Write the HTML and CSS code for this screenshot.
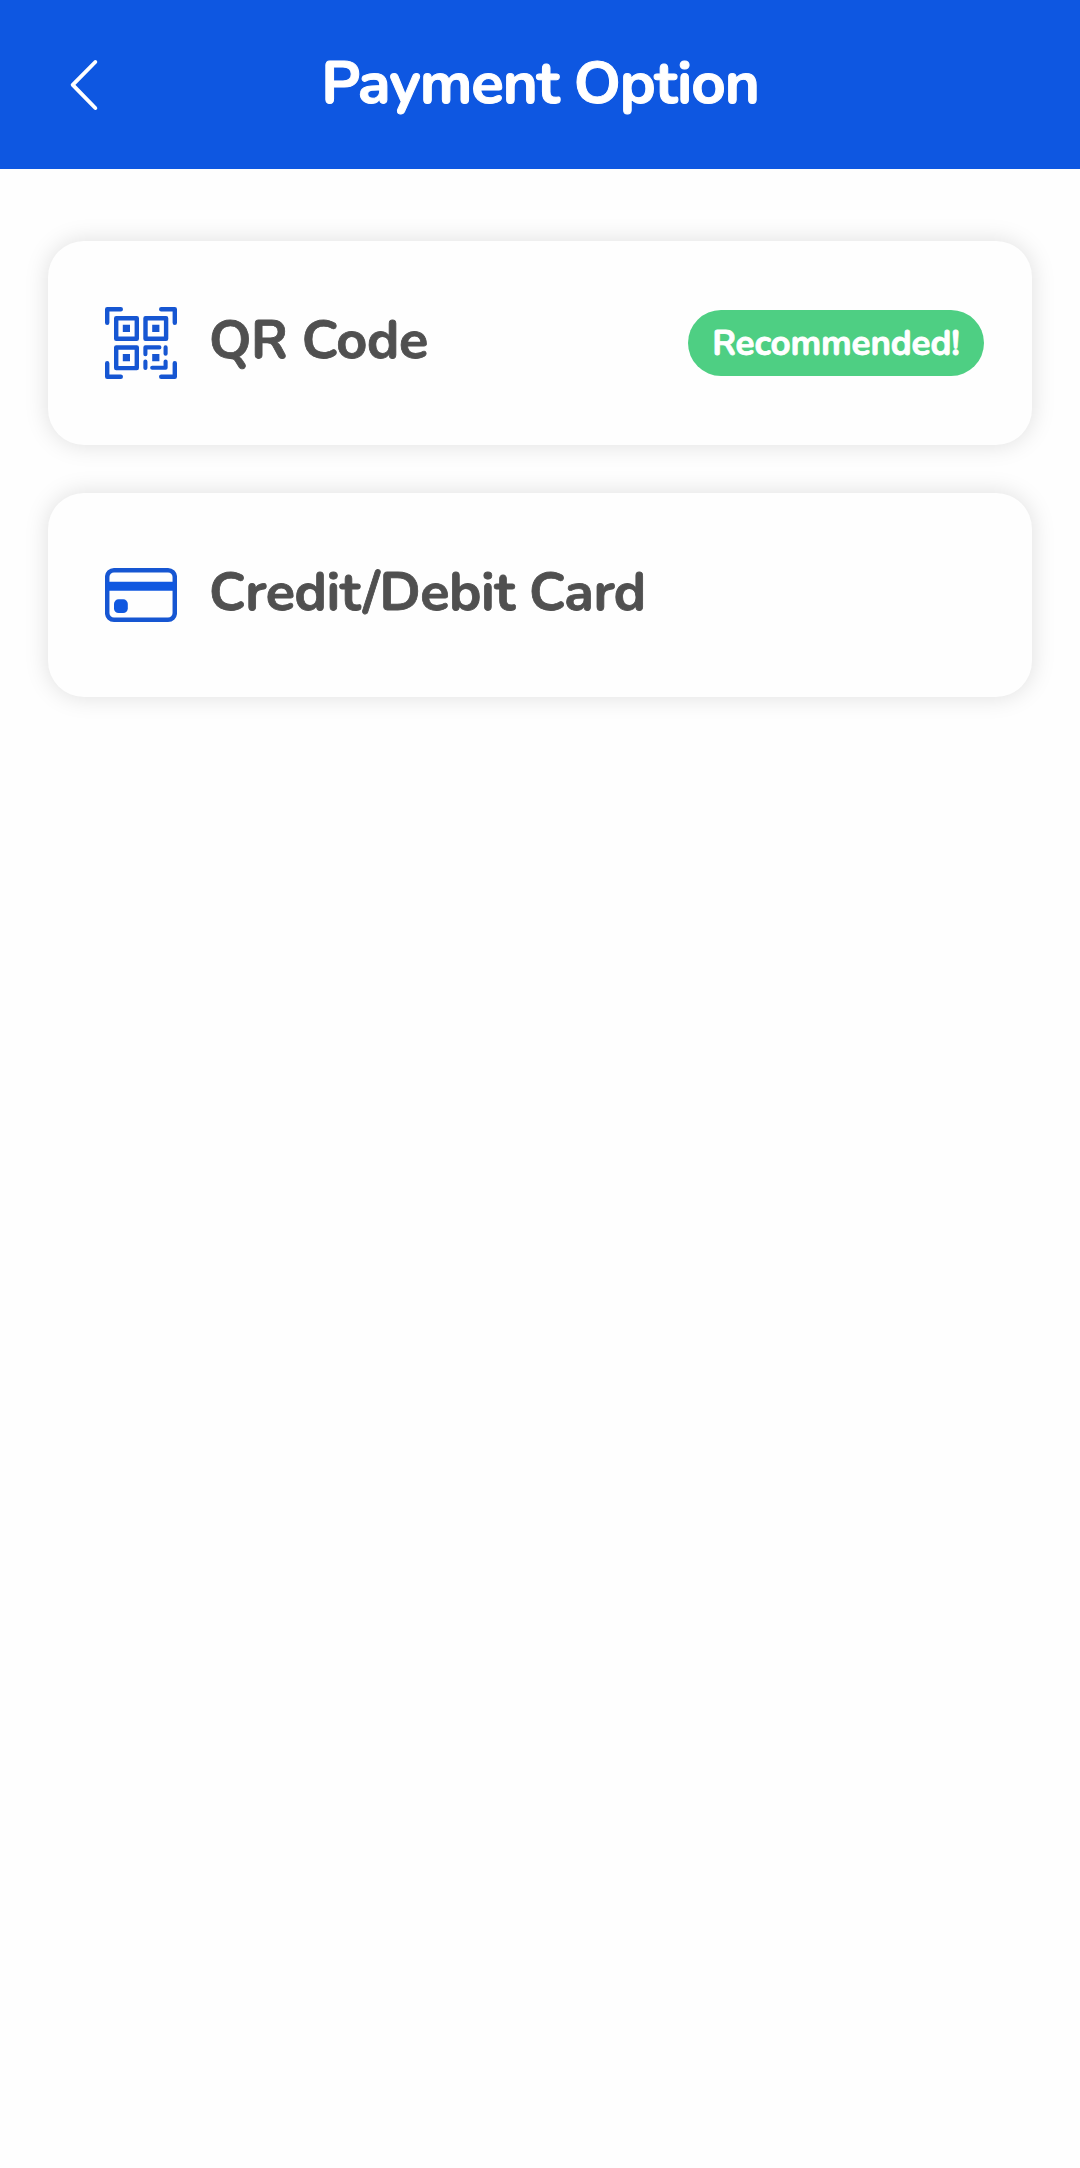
FILE: index.html
```html
<!DOCTYPE html>
<html lang="en">
<head>
<meta charset="utf-8">
<title>Payment Option</title>
<link rel="stylesheet" href="styles.css">
</head>
<body>
<header class="header">
  <button class="back" aria-label="Back">
    <svg width="30" height="54" viewBox="0 0 30 54" fill="none" stroke="#fff" stroke-width="3.9" stroke-linecap="round" stroke-linejoin="round"><path d="M26.3 4 3.7 26.9 26.3 50"/></svg>
  </button>
  <h1 class="title">Payment Option</h1>
</header>
<main class="options">
  <section class="option">
    <svg class="icon" viewBox="0 0 72 72" fill="none" stroke="#1656d2" stroke-width="4.4" stroke-linecap="round" stroke-linejoin="round">
      <path d="M2.2 15.8V2.2h13.6M56.2 2.2h13.6v13.6M2.2 56.2v13.6h13.6M56.2 69.8h13.6V56.2"/>
      <path d="M11.2 11.2h20.6v20.6H11.2zM40.5 11.2h20.6v20.6H40.5zM11.2 40.5h20.6v20.6H11.2z"/>
      <path stroke-width="4.1" d="M40.4 47.2v-6.8H54.4M60.6 40.4v6.4M40.4 54.6v6.4M60.6 54.6v6.1H47.2"/>
      <path fill="#1656d2" stroke="none" d="M17.8 17.8H25V25h-7.2zM47.2 17.8h7.2V25h-7.2zM17.8 47.1H25v7.2h-7.2zM47.2 47.1h7.2v7.2h-7.2z"/>
    </svg>
    <h2 class="name">QR Code</h2>
    <span class="badge">Recommended!</span>
  </section>
  <section class="option">
    <svg class="icon" viewBox="0 0 72 72">
      <rect x="2.2" y="11.2" width="67.6" height="49.6" rx="6.8" fill="none" stroke="#1656d2" stroke-width="4.5"/>
      <path fill="#1058e0" d="M2 22.7h68v9H2z"/>
      <rect x="9" y="40.3" width="13.8" height="13.8" rx="4.6" fill="#1058e0"/>
    </svg>
    <h2 class="name">Credit/Debit Card</h2>
  </section>
</main>
</body>
</html>
```
FILE: styles.css
```css
* { box-sizing: border-box; }
body {
  margin: 0;
  min-height: 2168px;
  background: #fefefe;
  font-family: Nunito, Lato, "Open Sans", sans-serif;
}
.header {
  display: grid;
  grid-template-columns: 180px 1fr 180px;
  align-items: center;
  height: 169px;
  background: #0e57e1;
  color: #fff;
}
.back {
  display: flex;
  margin: 0;
  padding: 0 0 0 69px;
  border: 0;
  background: none;
}
.title {
  margin: 0;
  padding-bottom: 4px;
  text-align: center;
  font-size: 60px;
  font-weight: 700;
  line-height: 72px;
  letter-spacing: -1.1px;
  white-space: nowrap;
  -webkit-text-stroke: 1px;
}
.options {
  display: flex;
  flex-direction: column;
  gap: 48px;
  padding: 72px 48px;
}
.option {
  display: flex;
  align-items: center;
  height: 204px;
  padding: 0 48px 0 57px;
  border-radius: 36px;
  background: #fefefe;
  box-shadow: 0 0 24px rgba(0, 0, 0, 0.13);
}
.icon {
  flex: none;
  width: 72px;
  height: 72px;
}
.name {
  margin: 0 0 0 32px;
  padding-bottom: 7px;
  color: #505050;
  font-size: 54px;
  font-weight: 700;
  line-height: 64px;
  letter-spacing: -0.4px;
  white-space: nowrap;
  -webkit-text-stroke: 0.8px;
}
.badge {
  display: flex;
  align-items: center;
  justify-content: center;
  width: 296px;
  height: 66px;
  margin-left: auto;
  border-radius: 33px;
  background: #4ecf83;
  color: #fff;
  font-size: 35px;
  font-weight: 700;
  letter-spacing: -0.15px;
  -webkit-text-stroke: 0.8px;
}
```
